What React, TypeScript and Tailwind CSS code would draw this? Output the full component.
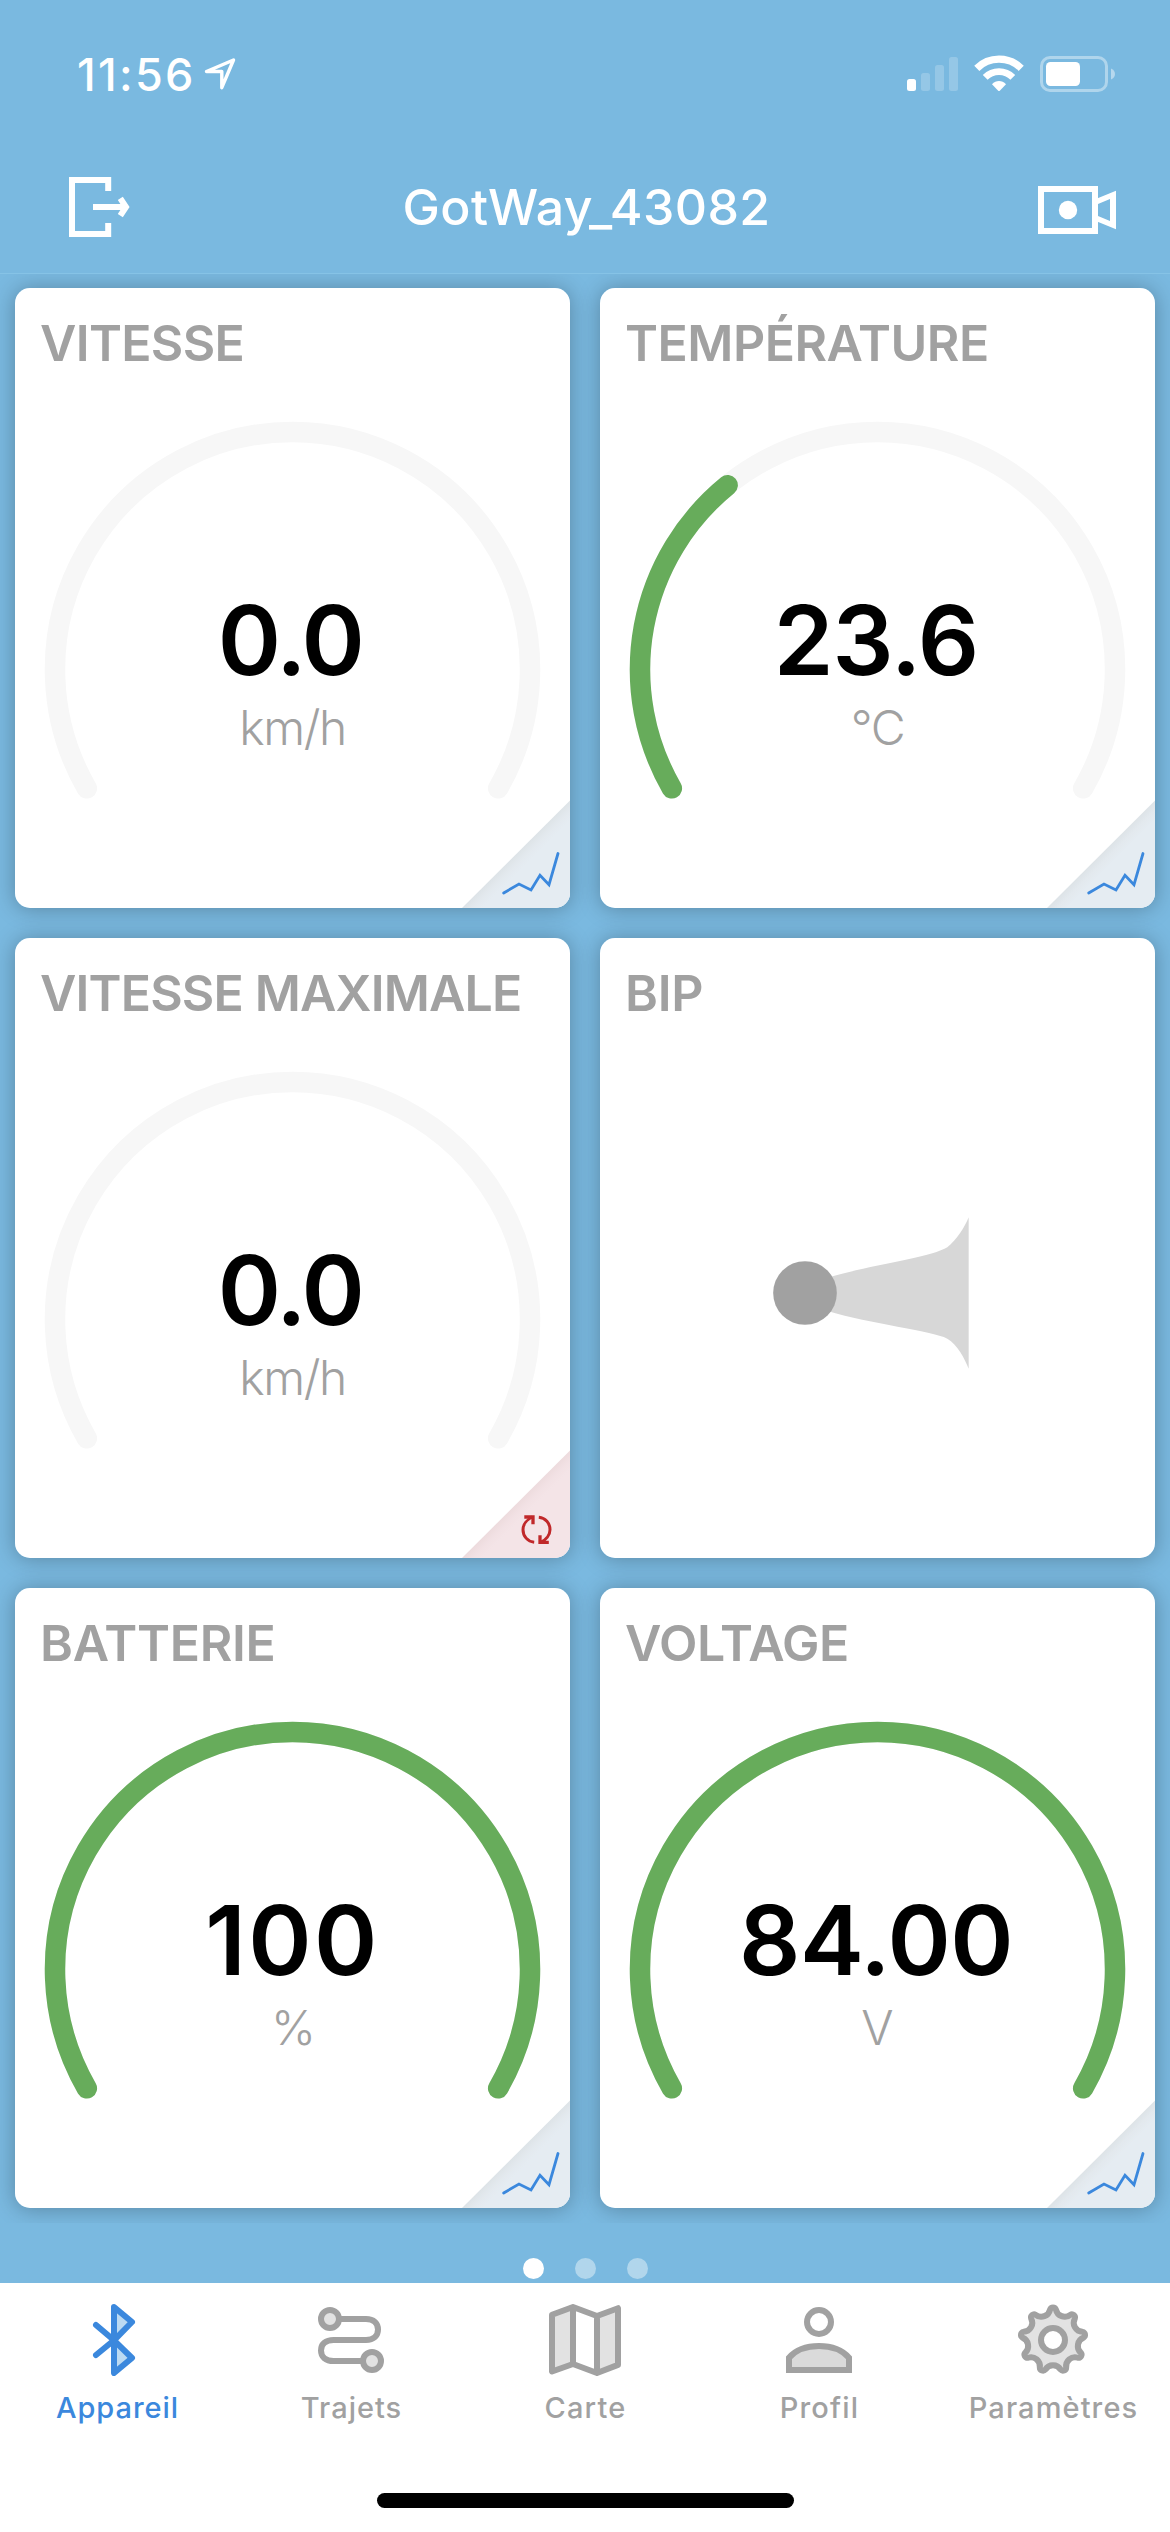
import type { ReactNode } from "react";

const GREEN = "#67ac5b";
const TRACK = "#f7f7f7";

/* 240° gauge: starts lower-left, runs clockwise over the top. */
const R = 237.5;
const CX = 277.5;
const CY = 381.5;

function arc(fraction: number) {
  const start = (150 * Math.PI) / 180;
  const sweep = (240 * Math.PI * fraction) / 180;
  const end = start + sweep;
  const x1 = CX + R * Math.cos(start);
  const y1 = CY + R * Math.sin(start);
  const x2 = CX + R * Math.cos(end);
  const y2 = CY + R * Math.sin(end);
  return `M${x1} ${y1}A${R} ${R} 0 ${sweep > Math.PI ? 1 : 0} 1 ${x2} ${y2}`;
}

function Gauge({ fraction }: { fraction: number }) {
  return (
    <svg className="absolute inset-0" width="555" height="620" viewBox="0 0 555 620" fill="none" strokeWidth="20.5" strokeLinecap="round">
      <path d={arc(1)} stroke={TRACK} />
      {fraction > 0 && <path d={arc(fraction)} stroke={GREEN} />}
    </svg>
  );
}

function Corner({ kind }: { kind: "chart" | "reset" }) {
  const chart = kind === "chart";
  return (
    <svg className="absolute right-0 bottom-0" width="108" height="108" viewBox="0 0 108 108" fill="none">
      <defs>
        <linearGradient id={`fold-${kind}`} gradientUnits="userSpaceOnUse" x1="54" y1="54" x2="64" y2="64">
          <stop offset="0" stopColor={chart ? "#dde3e7" : "#eddbdd"} />
          <stop offset="0.5" stopColor={chart ? "#e3e9ee" : "#f2e1e4"} />
          <stop offset="1" stopColor={chart ? "#e5ecf2" : "#f4e4e7"} />
        </linearGradient>
      </defs>
      <path d="M108 0.5V108H0Z" fill={`url(#fold-${kind})`} />
      {chart ? (
        <path d="M41.7 93L57 84L69 90L78 75.3L87 84.7L96 53.5" stroke="#3b88dd" strokeWidth="2.8" strokeLinecap="round" />
      ) : (
        <g stroke="#c0282a" strokeWidth="3">
          <path d="M72.2 92.2C65.500 91.500 61 86.200 61 79.700C61 74.500 65 69.500 70.500 67" />
          <path d="M62.300 67H71V74.200" strokeWidth="3.300" />
          <path d="M76.800 67.200C83.500 67.900 88 73.200 88 79.700C88 84.900 84 89.900 78.500 92.400" />
          <path d="M86.800 92.400H78V85.200" strokeWidth="3.300" />
        </g>
      )}
    </svg>
  );
}

function Card({ title, titleClass, children }: { title: string; titleClass: string; children: ReactNode }) {
  return (
    <section className="relative h-[620px] overflow-hidden rounded-[15px] bg-white">
      <h2 className={`pt-[30px] pl-[25px] text-[50px] leading-[50px] font-semibold whitespace-nowrap text-[#a1a1a1] ${titleClass}`}>{title}</h2>
      {children}
    </section>
  );
}

type Metric = {
  title: string;
  titleClass: string;
  value: string;
  valueClass: string;
  unit: string;
  unitClass: string;
  fraction: number;
  corner: "chart" | "reset";
};

function MetricCard(m: Metric) {
  return (
    <Card title={m.title} titleClass={m.titleClass}>
      <Gauge fraction={m.fraction} />
      <div className={`relative mt-[224px] text-center text-[96px] leading-[96px] font-semibold text-black ${m.valueClass}`}>{m.value}</div>
      <div className={`relative mt-[16px] text-center text-[48px] leading-[48px] font-light text-[#a1a1a1] ${m.unitClass}`}>{m.unit}</div>
      <Corner kind={m.corner} />
    </Card>
  );
}

function Shadowed({ children }: { children: ReactNode }) {
  return <div className="rounded-[15px] shadow-[0_1px_22px_rgba(0,0,0,0.28)]">{children}</div>;
}

function StatusBar() {
  return (
    <div className="flex h-[140px] items-start justify-between pr-[54px] pl-[77px] text-white">
      <div className="flex items-start pt-[52px]">
        <span className="w-[126px] text-[45px] leading-[45px] font-[550] tracking-[2.3px]">11:56</span>
        <svg className="mt-[5px]" width="34" height="34" viewBox="203 57 34 34" fill="none" stroke="currentColor" strokeWidth="3.4" strokeLinejoin="round">
          <path d="M206.500 71.500L233.500 60L221.800 87.700V71.500Z" />
        </svg>
      </div>
      <svg className="mt-[50px]" width="212" height="46" viewBox="904 50 212 46" fill="none">
        <rect x="907" y="79" width="9" height="12" rx="2.500" fill="#fff" />
        <g fill="#fff" opacity="0.2">
          <rect x="921" y="73" width="9" height="18" rx="2.500" />
          <rect x="935" y="65" width="9" height="26" rx="2.500" />
          <rect x="949" y="57" width="9" height="34" rx="2.500" />
        </g>
        <path d="M976.800 68.300A31.500 31.500 0 0 1 1021.200 68.300" stroke="#fff" strokeWidth="7.300" />
        <path d="M985.200 77.300A19.500 19.500 0 0 1 1012.800 77.300" stroke="#fff" strokeWidth="6.800" />
        <path d="M992 84.300C996 80 1002 80 1006 84.300L999.800 90.700Q999 91.400 998.200 90.700Z" fill="#fff" />
        <rect x="1041.500" y="57.500" width="65" height="33" rx="8.500" stroke="#fff" strokeWidth="3" opacity="0.4" />
        <rect x="1046" y="62" width="34" height="24" rx="4.500" fill="#fff" />
        <path d="M1111 68.500C1116.300 70.500 1116.300 77.500 1111 79.500Z" fill="#fff" opacity="0.45" />
      </svg>
    </div>
  );
}

function NavBar() {
  return (
    <div className="grid h-[134px] grid-cols-[1fr_auto_1fr] items-start border-b border-[#86c3e6] px-[54px] text-white">
      <svg className="mt-[37px] ml-[15px]" width="62" height="60" viewBox="69 177 62 60" fill="none" stroke="currentColor" strokeWidth="6">
        <path d="M108.200 191V180H72V234H108.200V223" />
        <path d="M93 207H126" />
        <path d="M120.300 198.300L126 207L120.300 215.700" />
      </svg>
      <h1 className="mt-[42px] pl-[3px] text-[50px] leading-[50px] font-[550] tracking-[0.4px]">GotWay_43082</h1>
      <svg className="mt-[46px] justify-self-end" width="78" height="48" viewBox="1038 186 78 48" fill="none">
        <rect x="1041" y="189" width="54" height="42" stroke="currentColor" strokeWidth="6" />
        <circle cx="1068" cy="210" r="9.200" fill="currentColor" />
        <path fillRule="evenodd" d="M1097 198.400L1116 190.800V229.200L1097 221.600ZM1098 204V216L1110 221V199Z" fill="currentColor" />
      </svg>
    </div>
  );
}

function HornIcon() {
  return (
    <svg className="mt-[199px] ml-[173px]" width="196" height="152" viewBox="99 111 588 456">
      <path d="M270 291C380 258 575 232 622 202C650 180 675 140 686 112V566C675 538 652 492 622 476C575 452 390 432 265 394Z" fill="#d7d7d7" />
      <circle cx="195" cy="339" r="95.500" fill="#a1a1a1" />
    </svg>
  );
}

/* Nine-tooth gear outline with rounded tips and scooped valleys. */
function gearPath() {
  const point = (deg: number) => {
    const a = ((deg - 90) * Math.PI) / 180;
    return `${(12 + 10.2 * Math.cos(a)).toFixed(3)} ${(12 + 10.2 * Math.sin(a)).toFixed(3)}`;
  };
  let d = `M${point(-5.5)}`;
  for (let i = 0; i < 9; i++) {
    const t = i * 40;
    d += `A1.050 1.050 0 0 1 ${point(t + 5.5)}A3 3 0 0 0 ${point(t + 34.5)}`;
  }
  return d + "Z";
}

function TabIcon({ children }: { children: ReactNode }) {
  return (
    <svg width="72" height="72" viewBox="0 0 24 24" fill="none" stroke="currentColor" strokeWidth="2">
      {children}
    </svg>
  );
}

function Tab({ label, className, children }: { label: string; className: string; children: ReactNode }) {
  return (
    <div className={`flex flex-col items-center pt-[21px] ${className}`}>
      {children}
      <span className="mt-[17px] pl-[1px] text-[29px] leading-[29px] font-[450]">{label}</span>
    </div>
  );
}

const metrics: Record<string, Metric> = {
  speed: { title: "VITESSE", titleClass: "tracking-[-0.67px]", value: "0.0", valueClass: "pr-[5px] tracking-[-2.5px]", unit: "km/h", unitClass: "tracking-[-1.4px]", fraction: 0, corner: "chart" },
  temperature: { title: "TEMPÉRATURE", titleClass: "tracking-[-0.5px]", value: "23.6", valueClass: "pr-[3px] tracking-[-0.9px]", unit: "°C", unitClass: "tracking-[-1.3px]", fraction: 0.337, corner: "chart" },
  maxSpeed: { title: "VITESSE MAXIMALE", titleClass: "tracking-[-0.83px]", value: "0.0", valueClass: "pr-[5px] tracking-[-2.5px]", unit: "km/h", unitClass: "tracking-[-1.4px]", fraction: 0, corner: "reset" },
  battery: { title: "BATTERIE", titleClass: "tracking-[-0.3px]", value: "100", valueClass: "tracking-[2.5px]", unit: "%", unitClass: "pl-[2px] tracking-normal", fraction: 1, corner: "chart" },
  voltage: { title: "VOLTAGE", titleClass: "tracking-[-0.5px]", value: "84.00", valueClass: "pr-[3px] tracking-[-0.6px]", unit: "V", unitClass: "tracking-normal", fraction: 1, corner: "chart" },
};

export default function App() {
  return (
    <div className="flex h-[2532px] w-[1170px] flex-col overflow-hidden bg-[#7ab9e0] font-['Inter',sans-serif]">
      <header>
        <StatusBar />
        <NavBar />
      </header>

      <main className="grid h-[1949px] grid-cols-2 content-start gap-[30px] overflow-hidden px-[15px] pt-[14px]">
        <Shadowed><MetricCard {...metrics.speed} /></Shadowed>
        <Shadowed><MetricCard {...metrics.temperature} /></Shadowed>
        <Shadowed><MetricCard {...metrics.maxSpeed} /></Shadowed>
        <Shadowed>
          <Card title="BIP" titleClass="tracking-[-0.3px]">
            <HornIcon />
          </Card>
        </Shadowed>
        <Shadowed><MetricCard {...metrics.battery} /></Shadowed>
        <Shadowed><MetricCard {...metrics.voltage} /></Shadowed>
      </main>

      <div className="flex h-[60px] items-start justify-center gap-[31px] pt-[35px]">
        <span className="size-[21px] rounded-full bg-white" />
        <span className="size-[21px] rounded-full bg-[#b1d6ec]" />
        <span className="size-[21px] rounded-full bg-[#b1d6ec]" />
      </div>

      <nav className="flex h-[249px] flex-col items-center bg-white">
        <div className="grid h-[210px] w-full grid-cols-5">
          <Tab label="Appareil" className="tracking-[0.95px] text-[#3b88dd]">
            <TabIcon>
              <path d="M11 1V12L17 6ZM11 12V23L17 18Z" fill="#bcdaf2" stroke="none" />
              <path d="M5 7L11 12.100L17 18L11 23V1L17 6L11 12.100L5 17" strokeLinecap="round" strokeLinejoin="round" />
            </TabIcon>
          </Tab>
          <Tab label="Trajets" className="tracking-[1px] text-[#a1a1a1]">
            <TabIcon>
              <path d="M8 5H17C19.600 5 21 6.400 21 8.500S19.600 12 17 12H6.200C3.500 12 2 13.400 2 15.500S3.500 19 6.200 19H16" />
              <circle cx="5" cy="5" r="3" fill="#e2e2e2" />
              <circle cx="19" cy="19" r="3" fill="#e2e2e2" />
            </TabIcon>
          </Tab>
          <Tab label="Carte" className="tracking-[1.2px] text-[#a1a1a1]">
            <TabIcon>
              <path d="M1 3.600L8 1V20L1 22.500ZM16 4L23 1.400V20.300L16 23Z" fill="#e2e2e2" stroke="none" />
              <path d="M1 3.600L8 1L16 4L23 1.400V20.300L16 23L8 20L1 22.500ZM8 1V20M16 4V23" strokeLinejoin="round" />
            </TabIcon>
          </Tab>
          <Tab label="Profil" className="tracking-[1.2px] text-[#a1a1a1]">
            <TabIcon>
              <circle cx="12" cy="6" r="4" />
              <path d="M2 22V17.900C4 15.600 7.400 14 12 14S20 15.600 22 17.900V22Z" fill="#dadada" />
            </TabIcon>
          </Tab>
          <Tab label="Paramètres" className="tracking-[1.1px] text-[#a1a1a1]">
            <TabIcon>
              <path d={gearPath()} fill="#e2e2e2" strokeLinejoin="round" />
              <circle cx="12" cy="12" r="4" fill="#fff" />
            </TabIcon>
          </Tab>
        </div>
        <div className="h-[15px] w-[417px] rounded-full bg-black" />
      </nav>
    </div>
  );
}
